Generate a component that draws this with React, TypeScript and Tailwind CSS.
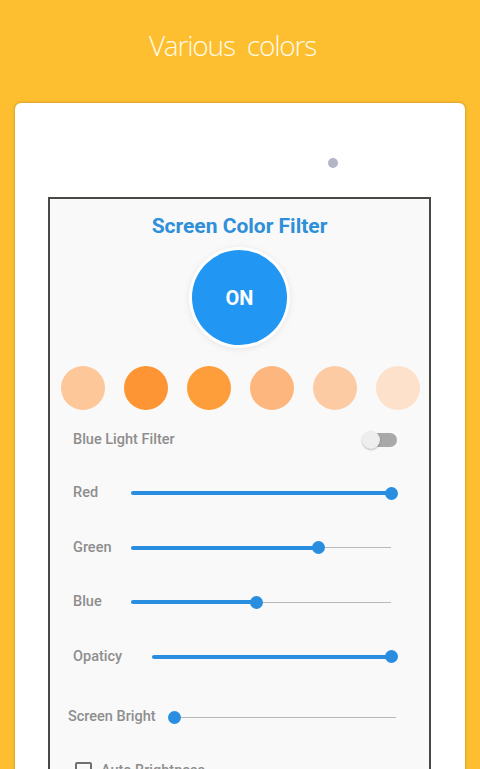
import React from "react";

function Slider({ start, width, value }: { start: number; width: number; value: number }) {
  return (
    <div className="relative h-[14px]" style={{ marginLeft: start, width }}>
      <div className="absolute left-0 right-0 top-[6.5px] h-px bg-[#b8b8b8]" />
      <div className="absolute left-0 top-[5px] h-[4px] rounded-full bg-[#2a8ee0]" style={{ width: value }} />
      <div
        className="absolute top-[0.5px] h-[13px] w-[13px] rounded-full bg-[#2a8ee0]"
        style={{ left: value - 6.5 }}
      />
    </div>
  );
}

function Row({ label, labelW, start, width, value, h, pl = 23 }: { label: string; labelW: number; start: number; width: number; value: number; h: string; pl?: number }) {
  return (
    <div className={`flex items-center ${h}`} style={{ paddingLeft: pl }}>
      <div className="shrink-0 text-[14.5px] font-medium text-[#8e8e8e]" style={{ width: labelW }}>
        {label}
      </div>
      <Slider start={start} width={width} value={value} />
    </div>
  );
}

export default function App() {
  const colors = ["#FDC79A", "#FD9534", "#FE9E3A", "#FDB77E", "#FDCBA3", "#FDE1CA"];
  return (
    <div className="h-[769px] w-[480px] overflow-hidden bg-[#FDBE30] font-['Roboto',sans-serif]">
      <div className="mt-[25px] pr-[15px] text-center text-[28px] leading-[40px] font-light tracking-[-1.2px] text-[#fffbe6] font-['Open_Sans',sans-serif]">
        Various&nbsp; colors
      </div>
      <div className="mx-[15px] mt-[38px] h-[700px] rounded-t-[6px] bg-white pt-[55px] shadow-[0_0_3px_rgba(90,70,40,0.45)]">
        <div className="ml-[313px] h-[10px] w-[10px] rounded-full bg-[#b3b6c6]" />
        <div className="ml-[33px] mt-[29px] h-[620px] w-[383px] border-2 border-[#4a4845] bg-[#f9f9f9]">
          <div className="pt-[15px] text-center text-[21px] leading-[24px] font-bold text-[#2f8fd8]">
            Screen Color Filter
          </div>
          <div className="mt-[12px] flex justify-center">
            <div className="flex h-[95px] w-[95px] items-center justify-center rounded-full bg-[#2196F3] shadow-[0_0_0_3px_#ffffff,0_1px_7px_3px_rgba(0,0,0,0.08)]">
              <span className="text-[20px] font-bold text-white">ON</span>
            </div>
          </div>
          <div className="mt-[21px] flex gap-[19px] pl-[11px]">
            {colors.map((c) => (
              <div key={c} className="h-[44px] w-[44px] shrink-0 rounded-full" style={{ backgroundColor: c }} />
            ))}
          </div>
          <div className="mt-[10px] flex h-[40px] items-center justify-between pl-[23px] pr-[32px]">
            <span className="text-[14.5px] font-medium text-[#8e8e8e]">Blue Light Filter</span>
            <div className="relative h-[18px] w-[35px]">
              <div className="absolute right-0 top-[2px] h-[14px] w-[26px] rounded-full bg-[#a9a9a9]" />
              <div className="absolute left-0 top-0 h-[18px] w-[18px] rounded-full bg-[#eeeeee] shadow-[0_1px_2px_rgba(0,0,0,0.25)]" />
            </div>
          </div>
          <div className="h-[6px]" />
          <Row label="Red" labelW={58} start={0} width={260} value={260} h="h-[54px]" />
          <Row label="Green" labelW={58} start={0} width={260} value={187} h="h-[55px]" />
          <Row label="Blue" labelW={58} start={0} width={260} value={125} h="h-[54px]" />
          <Row label="Opaticy" labelW={79} start={0} width={239} value={239} h="h-[55px]" />
          <Row label="Screen Bright" labelW={106} start={0} width={222} value={0} h="h-[66px]" pl={18} />
          <div className="flex items-start gap-[9px] pl-[25px] pt-[12px]">
            <div className="h-[17px] w-[17px] rounded-[2px] border-2 border-[#707070]" />
            <span className="text-[14.5px] font-medium leading-[17px] text-[#8e8e8e]">Auto Brightness</span>
          </div>
        </div>
      </div>
    </div>
  );
}
